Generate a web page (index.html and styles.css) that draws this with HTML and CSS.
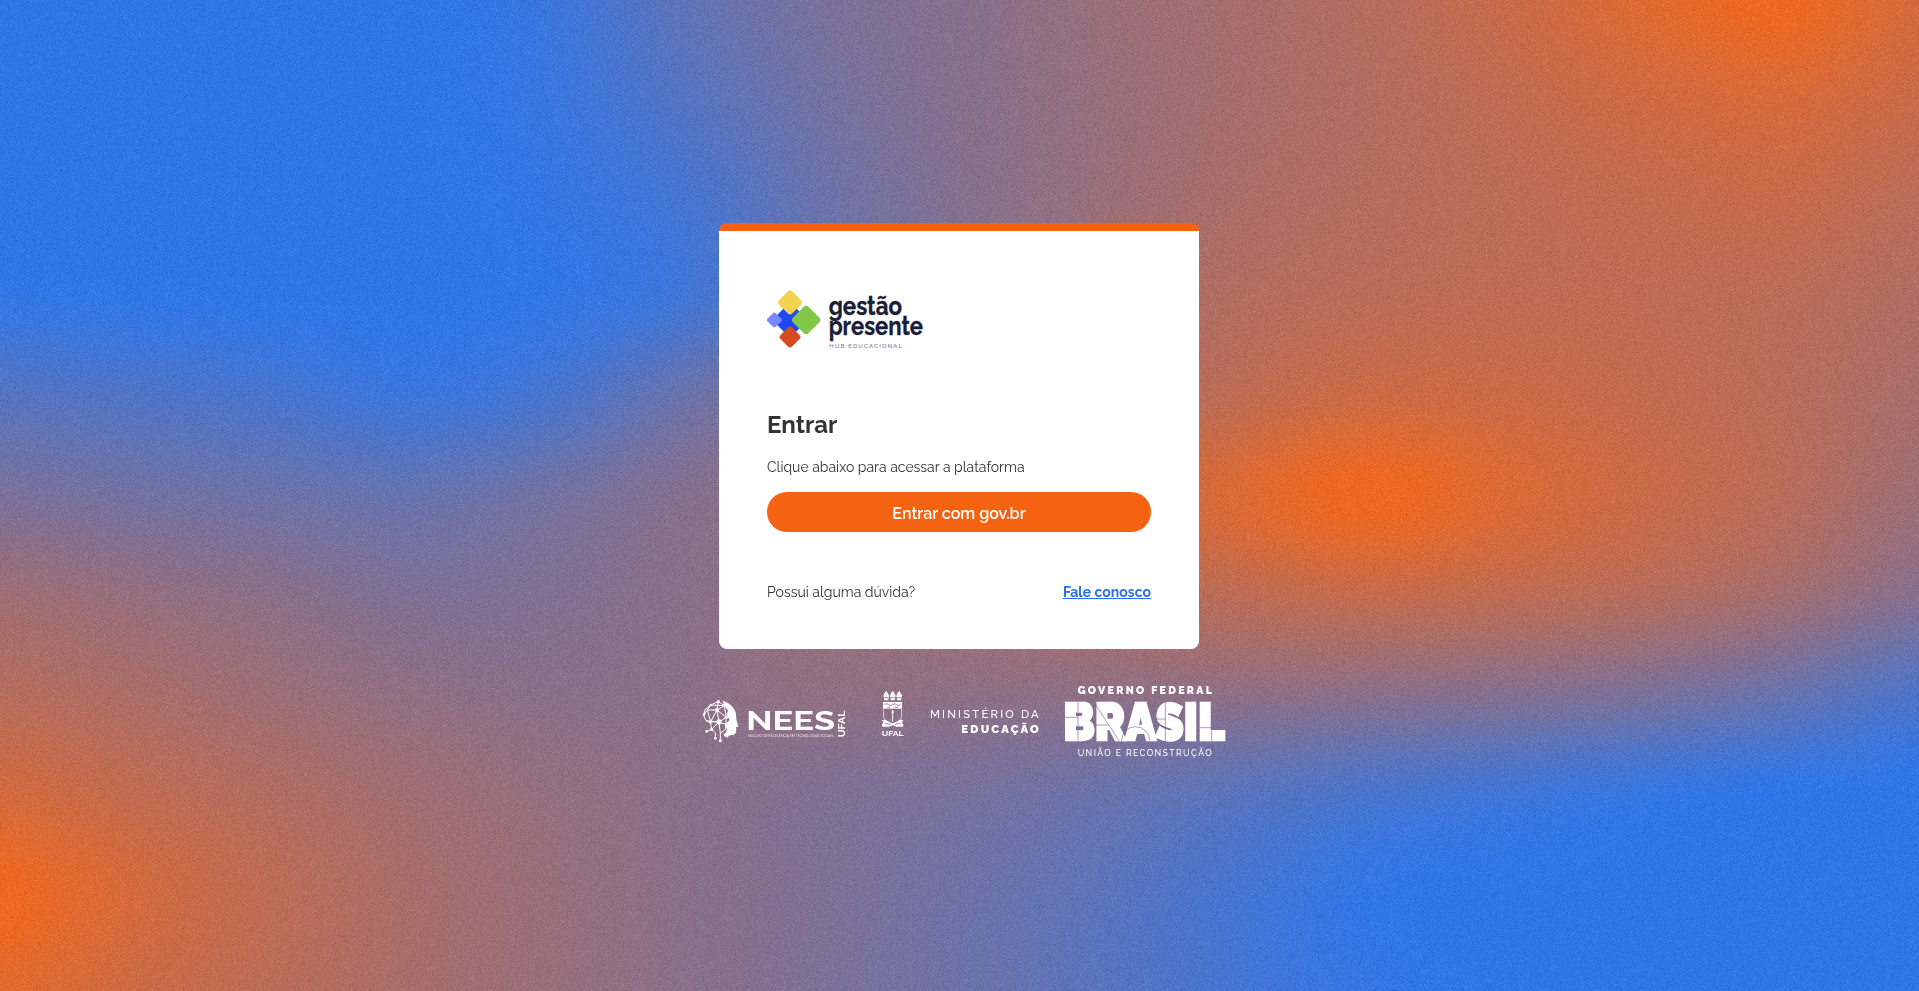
FILE: index.html
```html
<!DOCTYPE html>
<html lang="pt-BR">
<head>
<meta charset="utf-8">
<title>Gestão Presente - Entrar</title>
<link rel="stylesheet" href="styles.css">
</head>
<body>
<canvas class="backdrop" id="backdrop" width="1919" height="991"></canvas>
<main class="page">
  <section class="card">
    <svg class="brand" width="160" height="62" viewBox="51 57 480 186" role="img" aria-label="Gestão Presente Hub Educacional">
      <rect x="-38" y="-38" width="76" height="76" rx="9" fill="#2148f5" transform="translate(120 150) rotate(45)"/>
      <rect x="-17.5" y="-17.5" width="35" height="35" rx="6" fill="#7b88ff" transform="translate(73 150) rotate(45)"/>
      <rect x="-28" y="-28" width="56" height="56" rx="10" fill="#f2d24e" transform="translate(120 97) rotate(45)"/>
      <rect x="-33" y="-33" width="66" height="66" rx="11" fill="#82c846" transform="translate(168.500 150) rotate(45)"/>
      <rect x="-24.500" y="-24.500" width="49" height="49" rx="9" fill="#d64c1e" transform="translate(120 201) rotate(45)"/>
      <text class="brand-name" x="236" y="136" textLength="220" lengthAdjust="spacingAndGlyphs">gestão</text>
      <text class="brand-name" x="236" y="194" textLength="283" lengthAdjust="spacingAndGlyphs">presente</text>
      <text class="brand-tag" x="238" y="234" textLength="218">HUB EDUCACIONAL</text>
    </svg>
    <h1 class="title">Entrar</h1>
    <p class="lead">Clique abaixo para acessar a plataforma</p>
    <button class="login" type="button">Entrar com gov.br</button>
    <div class="help">
      <span class="question">Possui alguma dúvida?</span>
      <a class="contact" href="#">Fale conosco</a>
    </div>
  </section>
  <footer class="partners">
    <svg class="nees" width="150" height="80" viewBox="30 30 450 240">
      <path fill="#fff" d="M98 92C118 97 135 113 138 132C139 143 138 150 146 169L138 172L139 180Q138 194 129 195Q116 193 112 204L104 195L111 178L104 164L119 150L110 134L114 121L103 108Z"/>
      <g fill="none" stroke="#fff" stroke-width="3">
        <path d="M85 95L62 105L45 119L41 136L48 152L62 160L65 178L50 184M62 105L52 120L62 155L81 120L103 107L85 95L81 120L52 120L41 136M81 120L87 156L62 155M81 120L109 142L87 156L48 152M87 156L65 178L76 188V205M87 156L91 190L106 178L109 142M87 156L107 163M103 107L109 142M91 190V212M62 105L103 107"/>
      </g>
      <g fill="#fff">
        <circle cx="85" cy="95" r="5"/><circle cx="62" cy="105" r="4"/><circle cx="103" cy="107" r="4"/><circle cx="81" cy="120" r="6"/><circle cx="42" cy="134" r="4"/><circle cx="87" cy="156" r="8"/><circle cx="62" cy="156" r="5"/><circle cx="109" cy="142" r="5"/><circle cx="65" cy="178" r="5"/><circle cx="50" cy="184" r="4"/><circle cx="76" cy="205" r="4"/><circle cx="91" cy="212" r="5"/><circle cx="106" cy="195" r="5"/>
      </g>
      <text class="nees-name" x="169" y="180" textLength="266" lengthAdjust="spacingAndGlyphs">NEES</text>
      <text class="nees-tag" x="174" y="200" textLength="256" lengthAdjust="spacingAndGlyphs">NÚCLEO DE EXCELÊNCIA EM TECNOLOGIAS SOCIAIS</text>
      <text class="nees-side" transform="translate(464 202) rotate(-90)" textLength="80" lengthAdjust="spacingAndGlyphs">UFAL</text>
    </svg>
    <svg class="ufal" width="34" height="80" viewBox="48 30 102 240">
      <g fill="#fff">
        <path d="M70 77Q72 68 80 62Q82 70 87 76L85 91H73ZM90 77Q92 68 99 62Q102 70 107 76L104 91H93ZM109 77Q112 68 118 62Q121 70 126 76L123 91H112Z"/>
        <path d="M69 96H126V116H69Z"/>
        <path d="M66 151Q76 146 82 153Q98 165 114 153Q120 146 130 151L125 158Q134 162 128 170H109Q98 163 87 170H68Q62 162 71 158Z"/>
      </g>
      <g fill="none" stroke="#fff" stroke-width="2">
        <path d="M71 116V140Q73 154 98 162Q123 154 125 140V116"/>
        <path d="M98 122V154" stroke-width="3"/><path d="M95 129L98 120L101 129"/>
      </g>
      <path fill="none" stroke="#866a88" stroke-width="2.500" d="M74 104Q80 98 86 104T98 104T110 104T122 104M82 112H90M104 112H114M75 162Q84 158 91 164M121 162Q112 158 105 164M71 83H84M91 83H105M111 83H124"/>
      <text class="ufal-name" x="65" y="197" textLength="66" lengthAdjust="spacingAndGlyphs">UFAL</text>
    </svg>
    <svg class="mec" width="114" height="80" viewBox="204 30 342 240">
      <text class="mec-top" x="210" y="144" textLength="326">MINISTÉRIO DA</text>
      <text class="mec-main" x="304" y="189" textLength="232">EDUCAÇÃO</text>
    </svg>
    <svg class="brasil" width="170" height="80" viewBox="30 30 510 240">
      <text class="gov-top" x="83" y="71" textLength="403">GOVERNO FEDERAL</text>
      <text class="gov-name" x="40" y="210" textLength="484" lengthAdjust="spacingAndGlyphs">BRASIL</text>
      <path class="gov-lines" d="M44 142H84M84 96V212M133 98L207 212M133 165H175M215 212A42 42 0 0 1 299 212M308 147H346M346 97V212M447 173H524M485 173V212"/>
      <text class="gov-bottom" x="83" y="257" textLength="402">UNIÃO E RECONSTRUÇÃO</text>
    </svg>
  </footer>
</main>
<script src="backdrop.js"></script>
</body>
</html>
```
FILE: styles.css
```css
* { box-sizing: border-box; }
body {
  margin: 0;
  min-height: 100vh;
  overflow: hidden;
  background: #946f7f;
  font-family: Raleway, Lato, "Open Sans", sans-serif;
  color: #333;
}
.backdrop { position: fixed; inset: 0; width: 100%; height: 100%; z-index: -1; }
.page { width: 1918px; padding-top: 223px; display: flex; flex-direction: column; align-items: center; }
.card {
  width: 480px;
  height: 426px;
  padding: 58px 48px 0;
  background: #fff;
  border-top: 8px solid #f56211;
  border-radius: 8px;
}
.brand { display: block; margin-bottom: 58px; }
.brand-name { font: 700 76px Raleway, Lato, sans-serif; fill: #191d38; stroke: #191d38; stroke-width: 1px; }
.brand-tag { font: 600 18px Raleway, Inter, sans-serif; fill: #8b86a6; }
.title { margin: 0; font-size: 24px; line-height: 32px; font-weight: 700; }
.lead { margin: 14px 0 13px; font-size: 14px; line-height: 24px; }
.login {
  display: block;
  width: 100%;
  height: 40px;
  padding: 2px 0 0;
  border: 0;
  border-radius: 20px;
  background: #f56211;
  color: #fff;
  font: 600 16px Raleway, Lato, sans-serif;
}
.help { display: flex; justify-content: space-between; margin-top: 48px; font-size: 14px; line-height: 24px; }
.contact { color: #2b70e4; font-weight: 700; }
.partners { display: flex; width: 530px; margin: 31px 0 0 12px; justify-content: space-between; }
.partners svg { display: block; overflow: visible; flex: none; }
.partners text { fill: #fff; }
.ufal { margin-left: 8px; }
.nees-name { font: 700 78px Raleway, "Open Sans", sans-serif; }
.nees-tag { font: 500 9px Raleway, Inter, sans-serif; opacity: .8; }
.nees-side { font: 700 28px Raleway, Inter, sans-serif; }
.ufal-name { font: 700 23px Raleway, Inter, sans-serif; }
.mec-top { font: 500 34px Raleway, Lato, sans-serif; }
.mec-main { font: 900 34px Raleway, Lato, sans-serif; }
.gov-top { font: 900 32px Raleway, Lato, sans-serif; }
.gov-name { font: 900 154px Raleway, Inter, sans-serif; stroke: #fff; stroke-width: 7px; }
.gov-lines { fill: none; stroke: #80698f; stroke-width: 2px; }
.gov-bottom { font: 500 26px Raleway, Lato, sans-serif; }
```
FILE: backdrop.js
```js
// Grainy mesh gradient: each entry is the share of orange over blue.
const mesh = [
  [0, 0, 0, 0, .06, .24, .37, .44, .53, .60, .67, .77, .88, .97, .83],
  [0, 0, 0, 0, .05, .19, .34, .44, .52, .60, .66, .73, .80, .84, .77],
  [0, 0, 0, 0, .03, .12, .30, .43, .53, .62, .67, .71, .74, .76, .70],
  [.02, .01, 0, 0, .02, .10, .31, .44, .56, .66, .70, .72, .72, .70, .65],
  [.20, .17, .13, .07, .13, .30, .41, .50, .61, .72, .79, .78, .74, .69, .61],
  [.38, .34, .31, .28, .34, .43, .49, .56, .70, .86, .97, .86, .77, .69, .56],
  [.56, .51, .46, .40, .41, .46, .51, .56, .63, .71, .75, .72, .67, .58, .44],
  [.68, .62, .55, .49, .46, .47, .49, .48, .48, .48, .46, .43, .38, .29, .16],
  [.82, .73, .65, .57, .51, .46, .41, .37, .30, .22, .14, .09, .04, 0, 0],
  [.97, .82, .71, .61, .53, .46, .40, .32, .23, .12, .02, 0, 0, 0, 0],
  [.90, .79, .70, .61, .53, .46, .39, .31, .21, .11, .03, 0, 0, 0, 0]
];
const blue = [46, 118, 232];
const orange = [245, 103, 24];
const canvas = document.getElementById('backdrop');
const ctx = canvas.getContext('2d');
const { width, height } = canvas;
const image = ctx.createImageData(width, height);
const cols = mesh[0].length, rows = mesh.length;

function spline(a, b, c, d, t) {
  return b + .5 * t * (c - a + t * (2 * a - 5 * b + 4 * c - d + t * (3 * (b - c) + d - a)));
}
function sample(list, pos) {
  const i = Math.min(list.length - 2, Math.floor(pos));
  const at = k => list[Math.max(0, Math.min(list.length - 1, k))];
  return spline(at(i - 1), at(i), at(i + 1), at(i + 2), pos - i);
}
let seed = 12345;
function random() {
  seed = (Math.imul(seed, 1664525) + 1013904223) >>> 0;
  return seed / 4294967296;
}
for (let y = 0; y < height; y++) {
  const line = [];
  for (let c = 0; c < cols; c++) {
    line.push(sample(mesh.map(r => r[c]), y / (height - 1) * (rows - 1)));
  }
  for (let x = 0; x < width; x++) {
    const t = Math.max(0, Math.min(1, sample(line, x / (width - 1) * (cols - 1))));
    const grain = (random() + random() - 1) * 12 + 1;
    const o = (y * width + x) * 4;
    for (let k = 0; k < 3; k++) image.data[o + k] = blue[k] + (orange[k] - blue[k]) * t + grain;
    image.data[o + 3] = 255;
  }
}
ctx.putImageData(image, 0, 0);
```
